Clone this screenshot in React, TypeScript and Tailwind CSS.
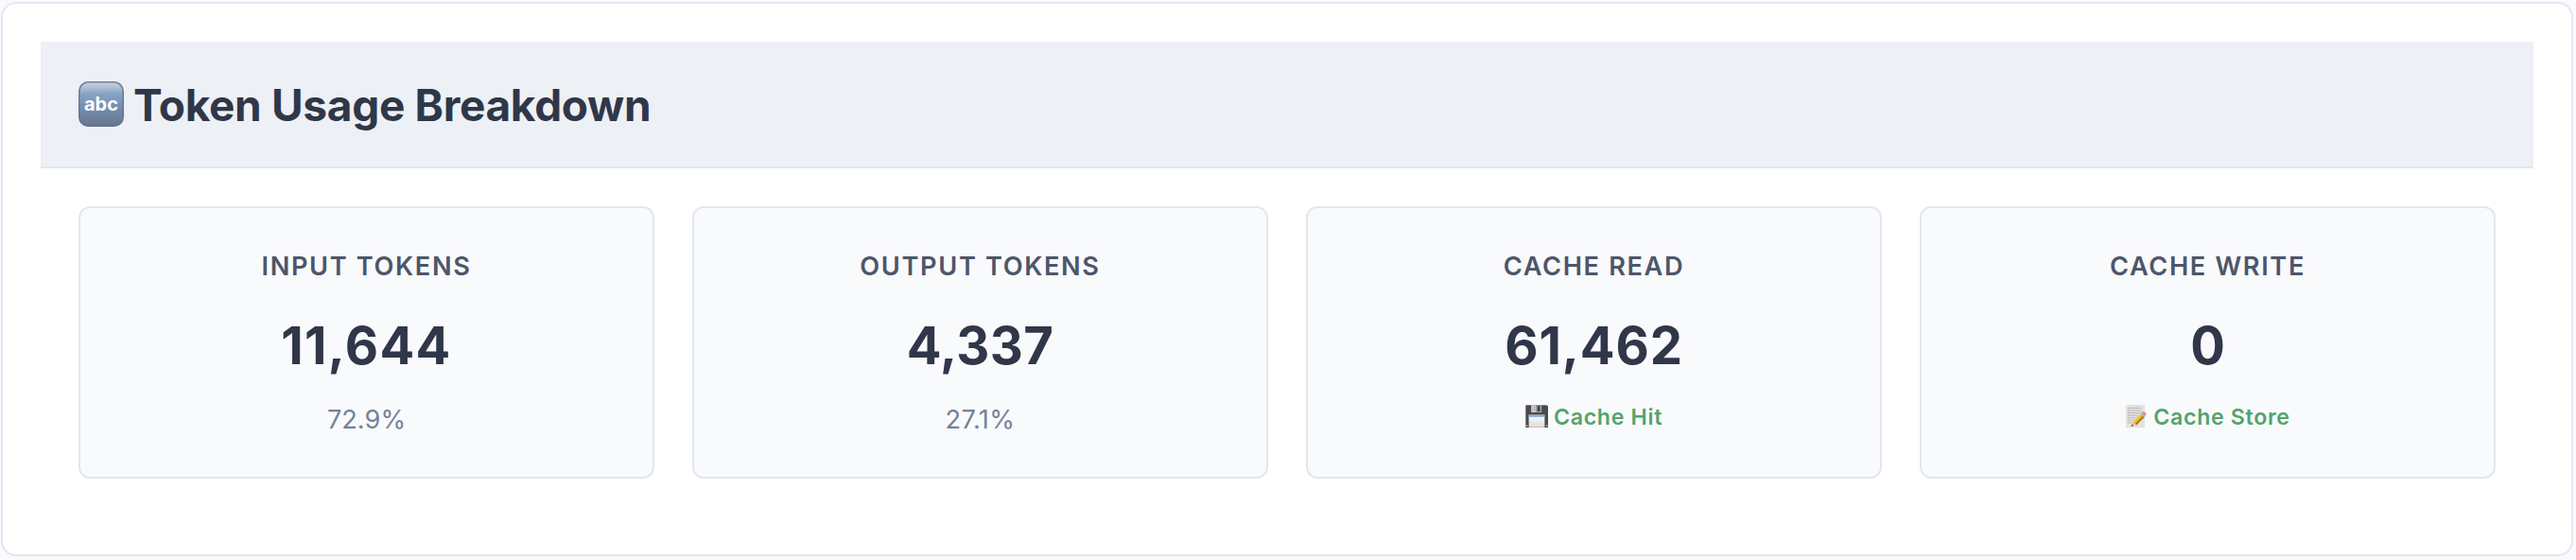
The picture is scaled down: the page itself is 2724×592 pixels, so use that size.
import React from 'react';

type Stat = {
  label: string;
  value: string;
  valueClass?: string;
  share?: string;
  shareClass?: string;
  badge?: string;
  icon?: React.ReactNode;
};

const AbcIcon: React.FC = () => (
  <svg viewBox="0 0 48 48" className="size-12 shrink-0" aria-hidden="true">
    <defs>
      <linearGradient id="abc-body" x1="0" y1="0" x2="0" y2="1">
        <stop offset="0" stopColor="#c6d1de" />
        <stop offset="0.1" stopColor="#b4c4d6" />
        <stop offset="0.26" stopColor="#87a4c5" />
        <stop offset="0.5" stopColor="#7893b5" />
        <stop offset="1" stopColor="#67768f" />
      </linearGradient>
      <linearGradient id="abc-edge" x1="0" y1="0" x2="0" y2="1">
        <stop offset="0" stopColor="#6c819c" />
        <stop offset="1" stopColor="#62718b" />
      </linearGradient>
    </defs>
    <rect x="0.8" y="0.8" width="46.4" height="46.4" rx="9.5" fill="url(#abc-body)" stroke="url(#abc-edge)" strokeWidth="1.6" />
    <text x="24" y="30.8" textAnchor="middle" fontFamily="Inter, sans-serif" fontSize="20" fontWeight="700" fill="#fff">
      abc
    </text>
  </svg>
);

const FloppyIcon: React.FC = () => (
  <svg viewBox="0 0 24 24" className="mb-0.5 size-6 shrink-0" aria-hidden="true">
    <defs>
      <linearGradient id="floppy-label" x1="0" y1="0" x2="0" y2="1">
        <stop offset="0" stopColor="#fbfbfb" />
        <stop offset="1" stopColor="#dcdcdc" />
      </linearGradient>
    </defs>
    <path d="M0.3 0.3h22.2L24 1.6V24H0.3z" fill="#4b4b4d" />
    <rect x="6" y="0.3" width="11.2" height="7.7" fill="#a4a6a8" />
    <rect x="6" y="0.3" width="5" height="7.7" fill="#bfc1c3" />
    <rect x="12.6" y="1" width="3" height="6" fill="#48484a" />
    <rect x="3.6" y="10.6" width="16.8" height="13.2" fill="url(#floppy-label)" />
    <rect x="3.6" y="10.6" width="16.8" height="2.2" fill="#86abdf" />
    <rect x="0.9" y="21.4" width="1.4" height="1.4" fill="#d0d0d0" />
    <rect x="21.9" y="21.4" width="1.4" height="1.4" fill="#d0d0d0" />
  </svg>
);

const MemoIcon: React.FC = () => (
  <svg viewBox="0 0 24 24" className="mb-0.5 size-6 shrink-0" aria-hidden="true">
    <rect x="1" y="0" width="20" height="24" fill="#e2e2e2" />
    <g stroke="#98989a" strokeWidth="0.7" strokeDasharray="2.4 0.7 1.4 0.6">
      <path d="M3.5 3.4h14M3 6h15M3 8.6h13M3 11.2h11M3 13.8h8M3 16.4h6M3 19h4" />
    </g>
    <path d="M6.8 22.8l1.5-5.4 4 3.8z" fill="#e6c799" />
    <path d="M6.8 22.8l.6-2.2 1.7 1.5z" fill="#3c3c3c" />
    <path d="M8.3 17.4L16.5 9.2l4 3.8-8.2 8.2z" fill="#e9b32a" />
    <path d="M8.3 17.4L16.5 9.2l1.3 1.2-8.2 8.2z" fill="#f6d258" />
    <path d="M11 20l8.2-8.2 1.3 1.2-8.2 8.2z" fill="#a8741c" />
    <path d="M16.5 9.2l1.4-1.4 4 3.8-1.4 1.4z" fill="#a8aeb5" />
    <path d="M17.9 7.8c1.1-1.1 2.4-1 3.4 0s1.6 2.6.6 3.8z" fill="#e58a90" />
  </svg>
);

const stats: Stat[] = [
  { label: 'Input Tokens', value: '11,644', valueClass: 'tracking-[0.025em]', share: '72.9%' },
  { label: 'Output Tokens', value: '4,337', valueClass: 'tracking-[0.006em]', share: '27.1%', shareClass: 'tracking-[0.015em]' },
  { label: 'Cache Read', value: '61,462', valueClass: 'tracking-[0.016em]', badge: 'Cache Hit', icon: <FloppyIcon /> },
  { label: 'Cache Write', value: '0', badge: 'Cache Store', icon: <MemoIcon /> },
];

const StatCard: React.FC<{ stat: Stat }> = ({ stat }) => (
  <div className="flex h-72 flex-col items-center rounded-xl border-2 border-[#e2e7f0] bg-[#f9fafc] pt-10 text-center">
    <div className="text-[27.2px] leading-[43px] font-semibold tracking-[0.06em] text-[#4d566a] uppercase">{stat.label}</div>
    <div className={`mt-[17px] text-[54.4px] leading-[90px] font-bold text-[#2f3748] ${stat.valueClass ?? ''}`}>{stat.value}</div>
    {stat.share && <div className={`mt-3 text-[27.2px] leading-[43px] text-[#758197] ${stat.shareClass ?? ''}`}>{stat.share}</div>}
    {stat.badge && (
      <div className="mt-3 flex items-center gap-1.5 text-[23.2px] leading-[38px] font-semibold tracking-[0.028em] text-[#54a36d]">
        {stat.icon}
        <span>{stat.badge}</span>
      </div>
    )}
  </div>
);

export default function App() {
  return (
    <div className="h-[592px] bg-[#f9fafc] pt-0.5 pr-[3px] pl-px font-['Inter',sans-serif]">
      <section className="h-[586px] rounded-2xl border-2 border-[#e2e7f0] bg-white p-10">
        <header className="flex h-[134px] items-center gap-2.5 border-b-2 border-[#e2e7f0] bg-[#edf0f5] px-10">
          <AbcIcon />
          <h2 className="pt-0.5 text-[46px] leading-[56px] font-bold tracking-[-0.007em] text-[#2f3748]">Token Usage Breakdown</h2>
        </header>
        <div className="grid grid-cols-4 gap-10 p-10">
          {stats.map((stat) => (
            <StatCard key={stat.label} stat={stat} />
          ))}
        </div>
      </section>
    </div>
  );
}
